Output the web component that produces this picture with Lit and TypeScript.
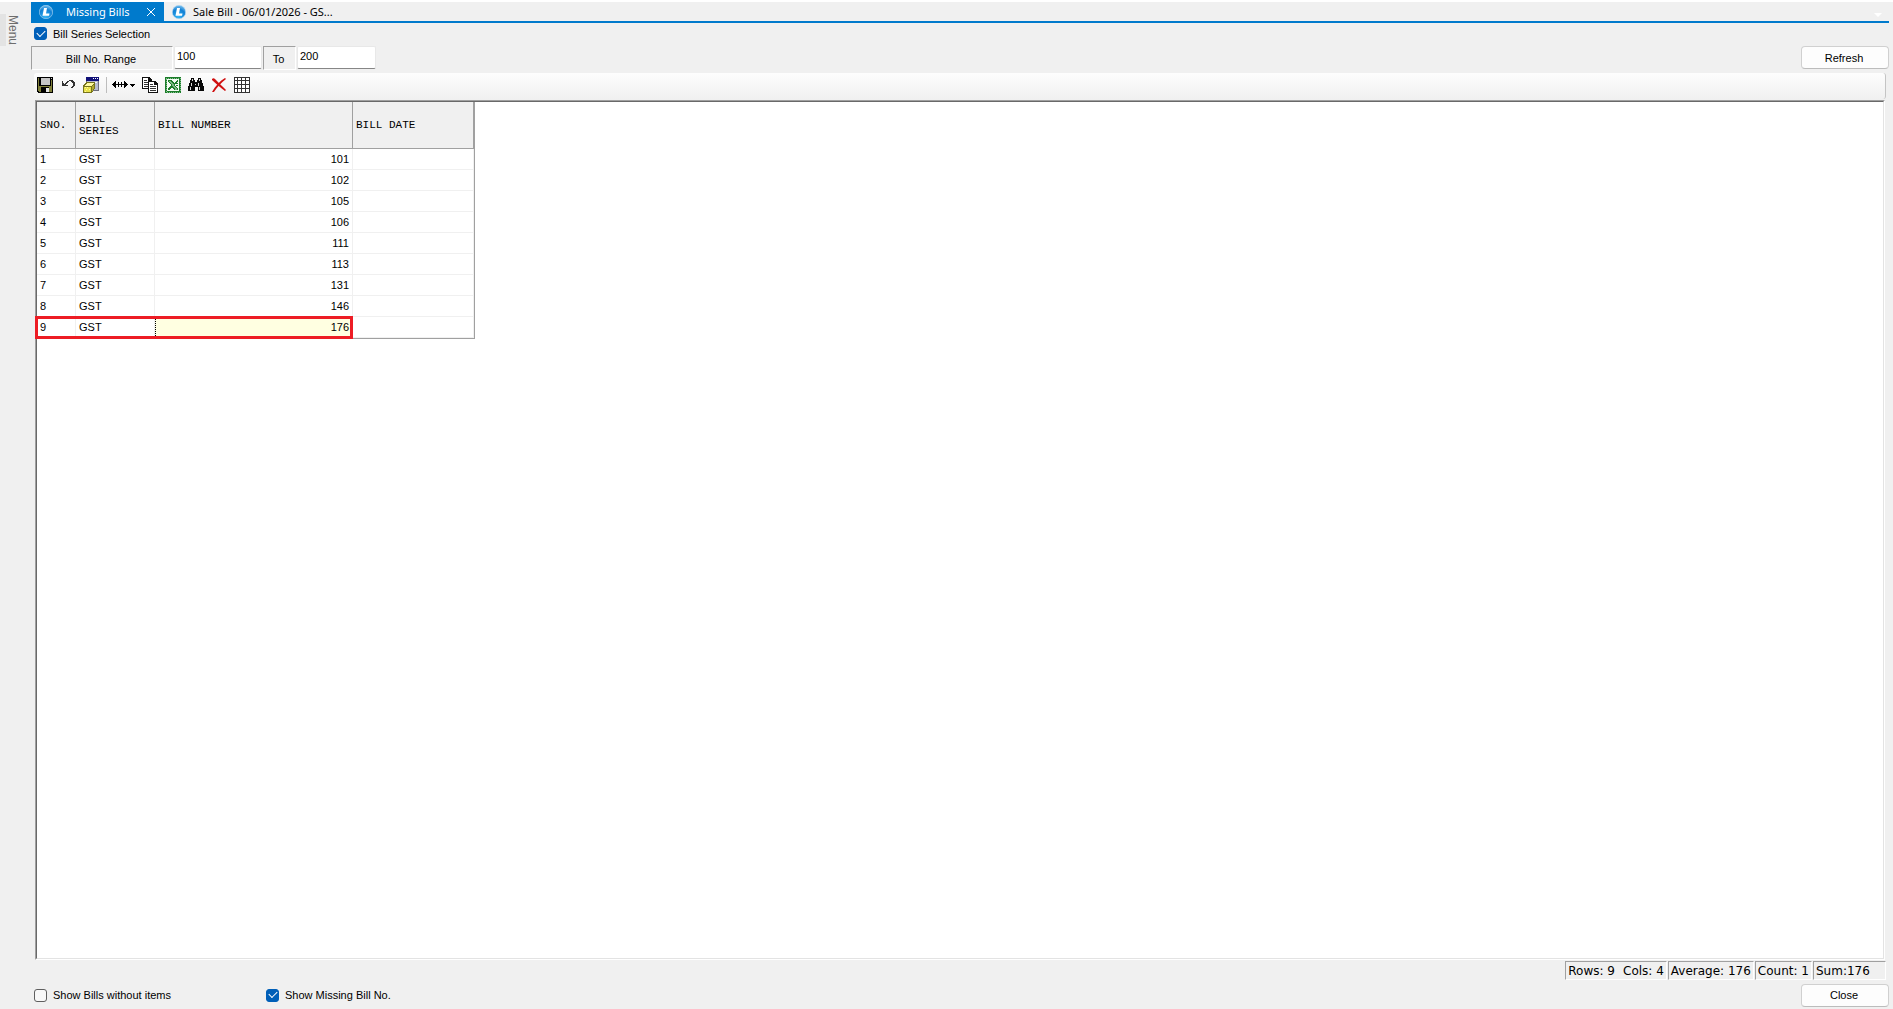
import { LitElement, html, svg, css, nothing } from "lit";
import { customElement, property, state } from "lit/decorators.js";

interface MissingBill {
  series: string;
  bill: number;
  date: string;
}

const BILLS: MissingBill[] = [101, 102, 105, 106, 111, 113, 131, 146, 176].map(
  (bill) => ({ series: "GST", bill, date: "" })
);

const icons: Record<string, unknown> = {
  save: svg`
    <path d="M0 0h16v16H1l-1-1z" fill="#000"/>
    <path d="M1 1h1v13H1zM14 3h1v12h-1zM2 9h12v1H2zM2 9h2v6H2zM12 9h2v6h-2z" fill="#80803a"/>
    <path d="M4 1h9v7H4z" fill="#c6c6c6"/>
    <path d="M14 1h1v1h-1z" fill="#c6c6c6"/>
    <path d="M9 11h3v4H9z" fill="#e6e6e6"/>`,
  undo: svg`
    <path d="M2 4h1v2h1v1h1V6h1V5h1V4h2V3h4v1h1v1h1v4h-1v1h-1v1h-2v-1h1V9h1V6h-1V5h-1V4h-2v1H8v1H7v1H6v1h2v1H2z" fill="#333"/>`,
  props: svg`
    <path d="M3 0h13v14H3z" fill="#70707c"/>
    <path d="M4 1h11v12H4z" fill="#b8bcd0"/>
    <path d="M3 0h13v4H3z" fill="#101078"/>
    <path d="M10 1h1v1h-1zM12 1h1v1h-1zM14 1h1v1h-1z" fill="#fff"/>
    <path d="M5 5h9v1H5z" fill="#f4f4f4"/>
    <path d="M0 9l3-4h9v6l-3 5H0z" fill="#77741c"/>
    <path d="M1 9l3-3h7L8 9z" fill="#fffba0"/>
    <path d="M9 10l2-3v4l-2 4z" fill="#b0a92e"/>
    <path d="M1 10h7v5H1z" fill="#e9e24c"/>
    <path d="M2 10h1v1H2zM4 10h1v1H4zM3 12h1v1H3zM6 12h1v1H6zM2 14h1v1H2z" fill="#fff9a0"/>`,
  width: svg`
    <path d="M0 7h1V6h1V5h1V4h1v3h2V5h1v2h2V5h1v2h2V4h1v1h1v1h1v1h1v1h-1v1h-1v1h-1v1h-1V8h-2v2H9V8H7v2H6V8H4v3H3v-1H2V9H1V8H0z" fill="#000"/>`,
  copy: svg`
    <path d="M0 0h7l3 3v9H0z" fill="#111"/>
    <path d="M1 1h5v3h3v7H1z" fill="#fff"/>
    <path d="M2 3h3v1H2zM2 5h6v1H2zM2 7h6v1H2zM2 9h6v1H2z" fill="#333"/>
    <path d="M6 4h7l3 3v9H6z" fill="#111"/>
    <path d="M7 5h5v3h3v7H7z" fill="#fff"/>
    <path d="M8 7h3v1H8zM8 9h6v1H8zM8 11h6v1H8zM8 13h6v1H8z" fill="#333"/>`,
  excel: svg`
    <path d="M0 0h16v16H0z" fill="#1c7c2a"/>
    <path d="M1 1h14v14H1z" fill="none" stroke="#7fc08a" stroke-width="1" stroke-dasharray="1 1"/>
    <path d="M2 2h12v12H2z" fill="#f4fbf4"/>
    <path d="M3 3h4l2 3 3-3h1v1l-3 4 3 4v1H9l-2-3-3 3H3v-1l3-4-3-4z" fill="#1c7c2a"/>
    <path d="M4.500 4l6.500 8.500M5.500 4l6.500 8.500" fill="none" stroke="#bfe3c4" stroke-width=".6"/>
    <path d="M11 6h2v1h-2zM11 8h2v1h-2z" fill="#1c7c2a"/>`,
  find: svg`
    <path d="M3 1h3v2h1v2h2V3h1V1h3v2h1v3h1v3h1v5h-6v-4H7v4H0V9h1V6h1V3h1z" fill="#080808"/>
    <path d="M4 2h1v2H4zM3 6h1v3H3zM2 10h1v3H2zM11 2h1v2h-1zM10 6h1v3h-1zM11 10h1v3h-1zM7 7h1v1H7z" fill="#d8d8d8"/>`,
  grid: svg`
    <path d="M0 0h16v16H0z" fill="#333"/>
    <path d="M1 1h2v2H1zM4 1h3v2H4zM8 1h3v2H8zM12 1h3v2h-3zM1 4h2v3H1zM4 4h3v3H4zM8 4h3v3H8zM12 4h3v3h-3zM1 8h2v3H1zM4 8h3v3H4zM8 8h3v3H8zM12 8h3v3h-3zM1 12h2v3H1zM4 12h3v3H4zM8 12h3v3H8zM12 12h3v3h-3z" fill="#fff"/>`,
};

const deleteIcon = svg`
  <path d="M1 2c1-1 2-1 3 0 3 3 7 7 11 11l-1 1C9 10 5 7 1 3z" fill="#d01010"/>
  <path d="M14 1l1 1C10 6 6 10 3 15H1C4 9 9 4 14 1z" fill="#d01010"/>`;

const logo = html`
  <svg class="logo" viewBox="0 0 14 14" aria-hidden="true">
    <defs>
      <radialGradient id="ball" cx=".45" cy=".85" r=".9">
        <stop offset="0" stop-color="#35b5f5" />
        <stop offset=".6" stop-color="#1180d4" />
        <stop offset="1" stop-color="#8ccbf3" />
      </radialGradient>
    </defs>
    <circle cx="7" cy="7" r="6.700" fill="url(#ball)" stroke="#b5d9f2" stroke-width=".6" />
    <path d="M5 3h3L7 8.500h3.500L10 10.800H3.500z" fill="#fff" />
  </svg>
`;

@customElement("tool-button")
export class ToolButton extends LitElement {
  @property() icon = "";
  @property() label = "";

  static styles = css`
    :host {
      display: block;
    }
    .tool {
      display: flex;
      align-items: center;
      gap: 2px;
      margin: 0;
      padding: 0;
      border: 0;
      background: none;
    }
    .glyph {
      display: block;
      width: 16px;
      height: 16px;
    }
    .crisp {
      shape-rendering: crispEdges;
    }
    .caret {
      display: block;
      width: 5px;
      height: 3px;
    }
  `;

  render() {
    const smooth = this.icon === "delete";
    return html`
      <button class="tool" type="button" title=${this.label} aria-label=${this.label}>
        <svg class="glyph ${smooth ? "" : "crisp"}" viewBox="0 0 16 16">
          ${smooth ? deleteIcon : icons[this.icon]}
        </svg>
        ${this.icon === "width"
          ? html`<svg class="caret crisp" viewBox="0 0 5 3"><path d="M0 0h5v1H4v1H3v1H2V2H1V1H0z" /></svg>`
          : nothing}
      </button>
    `;
  }
}

@customElement("app-root")
export class AppRoot extends LitElement {
  @state() private selected = BILLS.length - 1;

  static styles = css`
    :host {
      display: flex;
      box-sizing: border-box;
      min-height: 100vh;
      border-top: 2px solid #fff;
      background: #f0f0f0;
      color: #000;
      font: 11px/14px "Liberation Sans", Arial, sans-serif;
    }
    * {
      box-sizing: border-box;
    }
    button,
    input {
      font: inherit;
      color: inherit;
    }
    .side {
      flex: 0 0 31px;
      padding-top: 12px;
    }
    .menu {
      display: block;
      width: 20px;
      height: 32px;
      padding: 0;
      border: 0;
      border-left: 6px solid #e3e3e3;
      background: none;
      color: #6d6d6d;
      font-size: 12px;
      line-height: 14px;
      writing-mode: vertical-rl;
    }
    .main {
      flex: 1;
      min-width: 0;
      display: flex;
      flex-direction: column;
      padding-right: 4px;
    }
    .tabs {
      display: flex;
      height: 21px;
      border-bottom: 2px solid #007acc;
      font: 11px/18px "Noto Sans", "Open Sans", sans-serif;
    }
    .tab {
      display: flex;
      align-items: center;
      gap: 7px;
      padding: 0 8px;
      border: 0;
      background: none;
      white-space: nowrap;
    }
    .tab.active {
      width: 133px;
      gap: 13px;
      background: #007acc;
      color: #fff;
    }
    .logo {
      flex: none;
      width: 14px;
      height: 14px;
    }
    .cross {
      flex: none;
      width: 10px;
      height: 10px;
      margin-left: auto;
    }
    .more {
      display: flex;
      align-items: center;
      margin-left: auto;
      padding: 6px 7px 0 0;
      border: 0;
      background: none;
    }
    .more svg {
      width: 8px;
      height: 4px;
    }
    .check {
      display: flex;
      align-items: center;
      gap: 6px;
    }
    .check input {
      appearance: none;
      display: grid;
      place-items: center;
      width: 13px;
      height: 13px;
      margin: 0;
      border: 1px solid #5f5f5f;
      border-radius: 3px;
      background: #f8f8f8;
    }
    .check input:checked {
      border-color: #005fb8;
      background: #005fb8;
    }
    .check input:checked::after {
      content: "";
      width: 7px;
      height: 4px;
      margin-bottom: 3px;
      border: solid #fff;
      border-width: 0 0 1px 1px;
      transform: rotate(-45deg);
    }
    .series {
      height: 23px;
      padding: 0 0 2px 3px;
    }
    .range {
      display: flex;
      height: 24px;
      gap: 1px;
    }
    .sunken {
      display: flex;
      align-items: center;
      justify-content: center;
      border: 1px solid;
      border-color: #a0a0a0 #fff #fff #a0a0a0;
    }
    .from-label {
      width: 142px;
      padding: 2px 2px 0 0;
    }
    .to-label {
      width: 33px;
      padding: 2px 2px 0 0;
    }
    .box {
      width: 88px;
      height: 23px;
      padding: 0 2px 3px;
      border: 1px solid #e8e8e8;
      border-bottom-color: #868686;
      border-radius: 2px;
      background: #fff;
      outline: 0;
    }
    .box.upper {
      width: 79px;
    }
    .push {
      width: 88px;
      height: 23px;
      padding: 0 2px 0 0;
      border: 1px solid #d0d0d0;
      border-bottom-color: #bcbcbc;
      border-radius: 4px;
      background: #fdfdfd;
    }
    .range .push {
      margin-left: auto;
    }
    .toolbar {
      display: flex;
      align-items: center;
      gap: 7px;
      height: 26px;
      margin: 3px 3px 1px;
      padding: 0 3px 2px;
      border-right: 1px solid #c4c4c4;
      border-radius: 3px;
      background: linear-gradient(#fdfdfd, #f0f0f0);
    }
    .divider {
      width: 1px;
      height: 16px;
      margin-right: -2px;
      background: #bdbdbd;
    }
    .panel {
      flex: 1;
      margin: 0 4px 1px;
      border: 1px solid;
      border-color: #a0a0a0 #fff #fff #a0a0a0;
    }
    .well {
      height: 100%;
      border: 1px solid;
      border-color: #696969 #e3e3e3 #e3e3e3 #696969;
      background: #fff;
    }
    .sheet {
      position: relative;
      width: 438px;
    }
    table {
      width: 100%;
      table-layout: fixed;
      border-collapse: separate;
      border-spacing: 0;
      border-right: 1px solid #a0a0a0;
      border-bottom: 1px solid #a0a0a0;
    }
    th {
      height: 47px;
      padding: 0 3px;
      border-right: 1px solid #a0a0a0;
      border-bottom: 1px solid #a0a0a0;
      background: #f0f0f0;
      font: 11px/12px "Liberation Mono", "Courier New", monospace;
      text-align: left;
    }
    td {
      height: 21px;
      padding: 0 3px;
      border-right: 1px solid #f0f0f0;
      border-bottom: 1px solid #f0f0f0;
    }
    .col-no {
      width: 39px;
    }
    .col-series {
      width: 79px;
    }
    .col-number {
      width: 198px;
    }
    .number {
      text-align: right;
    }
    .current {
      outline: 1px dotted #000;
      outline-offset: -1px;
      background: #ffffe1;
    }
    .highlight {
      position: absolute;
      left: -2px;
      bottom: 0;
      width: 318px;
      height: 23px;
      border: 3px solid #ed1c24;
      pointer-events: none;
    }
    .status {
      display: flex;
      justify-content: flex-end;
      gap: 1px;
      height: 19px;
      padding-right: 3px;
      font: 12px/16px "DejaVu Sans", Verdana, sans-serif;
    }
    .status .sunken {
      justify-content: flex-start;
      gap: 8px;
      padding: 0 2px;
    }
    .status .sum {
      width: 73px;
    }
    .footer {
      display: flex;
      align-items: center;
      height: 29px;
      padding: 1px 0 0 3px;
    }
    .footer .check {
      width: 232px;
    }
    .footer .push {
      margin-left: auto;
    }
  `;

  private renderRow(row: MissingBill, index: number) {
    return html`
      <tr @click=${() => (this.selected = index)}>
        <td>${index + 1}</td>
        <td>${row.series}</td>
        <td class="number ${index === this.selected ? "current" : ""}">${row.bill}</td>
        <td>${row.date}</td>
      </tr>
    `;
  }

  render() {
    return html`
      <aside class="side"><button class="menu" type="button">Menu</button></aside>
      <main class="main">
        <nav class="tabs">
          <button class="tab active" type="button">
            ${logo}<span>Missing Bills</span>
            <svg class="cross" viewBox="0 0 10 10" fill="none" stroke="#fff">
              <path d="M1 1l8 8M9 1L1 9" />
            </svg>
          </button>
          <button class="tab" type="button">${logo}<span>Sale Bill - 06/01/2026 - GS...</span></button>
          <button class="more" type="button" aria-label="More tabs">
            <svg viewBox="0 0 8 4"><path d="M0 0h8L4 4z" fill="#fff" /></svg>
          </button>
        </nav>
        <label class="check series"><input type="checkbox" checked />Bill Series Selection</label>
        <div class="range">
          <label class="sunken from-label" for="from">Bill No. Range</label>
          <input class="box" id="from" type="text" value="100" />
          <label class="sunken to-label" for="to">To</label>
          <input class="box upper" id="to" type="text" value="200" />
          <button class="push" type="button">Refresh</button>
        </div>
        <div class="toolbar">
          <tool-button icon="save" label="Save"></tool-button>
          <tool-button icon="undo" label="Undo"></tool-button>
          <tool-button icon="props" label="Properties"></tool-button>
          <span class="divider"></span>
          <tool-button icon="width" label="Column width"></tool-button>
          <tool-button icon="copy" label="Copy"></tool-button>
          <tool-button icon="excel" label="Export to Excel"></tool-button>
          <tool-button icon="find" label="Find"></tool-button>
          <tool-button icon="delete" label="Delete"></tool-button>
          <tool-button icon="grid" label="Grid"></tool-button>
        </div>
        <section class="panel">
          <div class="well">
            <div class="sheet">
              <table>
                <thead>
                  <tr>
                    <th class="col-no">SNO.</th>
                    <th class="col-series">BILL SERIES</th>
                    <th class="col-number">BILL NUMBER</th>
                    <th>BILL DATE</th>
                  </tr>
                </thead>
                <tbody>
                  ${BILLS.map((row, index) => this.renderRow(row, index))}
                </tbody>
              </table>
              <span class="highlight"></span>
            </div>
          </div>
        </section>
        <div class="status">
          <span class="sunken"><span>Rows: 9</span><span>Cols: 4</span></span>
          <span class="sunken">Average: 176</span>
          <span class="sunken">Count: 1</span>
          <span class="sunken sum">Sum:176</span>
        </div>
        <footer class="footer">
          <label class="check"><input type="checkbox" />Show Bills without items</label>
          <label class="check"><input type="checkbox" checked />Show Missing Bill No.</label>
          <button class="push" type="button">Close</button>
        </footer>
      </main>
    `;
  }
}
